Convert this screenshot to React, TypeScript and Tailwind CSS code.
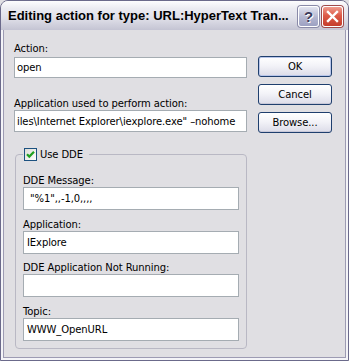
import React from 'react'

const Label = ({ text, className = '' }: { text: string; className?: string }) => (
    <div className={`h-[12px] leading-[12px] whitespace-nowrap ${className}`}>{text}</div>
)

const Field = ({ value, className = '' }: { value: string; className?: string }) => (
    <div className={`flex items-center overflow-hidden whitespace-nowrap bg-white border border-[#a5acb2] ${className}`}>
        {value}
    </div>
)

const XpButton = ({ label, isDefault = false }: { label: string; isDefault?: boolean }) => (
    <div
        className={`h-[21px] w-[74px] flex items-center justify-center rounded-[3px] border border-[#1f3f6e] bg-[linear-gradient(to_bottom,#ffffff,#f3f3f8_45%,#dcdce8)] ${
            isDefault ? 'shadow-[inset_0_0_0_1px_#b9c6ea]' : 'shadow-[inset_0_-1px_0_#c8c8d8]'
        }`}
    >
        {label}
    </div>
)

const App = () => {
    const ddeFields = [
        { label: 'DDE Message:', value: ' "%1",,-1,0,,,,', gap: 'mt-[14px]' },
        { label: 'Application:', value: 'IExplore', gap: 'mt-[9px]' },
        { label: 'DDE Application Not Running:', value: '', gap: 'mt-[8px]' },
        { label: 'Topic:', value: 'WWW_OpenURL', gap: 'mt-[9px]' },
    ]

    return (
        <div className="w-[349px] h-[361px] bg-[#e0dfe3]">
            <div className="flex flex-col h-full rounded-t-[8px] border border-[#6b6a8b] overflow-hidden">
                {/* title bar */}
                <div className="h-[29px] flex items-center pl-[7px] pr-[5px] bg-[linear-gradient(to_bottom,#fdfdfe_0%,#ececf2_25%,#dfdfe8_60%,#c4c4d3_100%)]">
                    <span className="flex-1 pt-[1px] text-[13px] font-bold text-black whitespace-nowrap font-['Liberation_Sans',Arial,sans-serif]">
                        Editing action for type: URL:HyperText Tran...
                    </span>
                    <div className="flex gap-[3px] pt-[1px]">
                        <div className="w-[21px] h-[21px] rounded-[3px] border border-white flex items-center justify-center bg-[linear-gradient(to_bottom,#e2e4f0,#b3b6d0_55%,#9da1c2)] shadow-[0_0_0_1px_#8a8aa8]">
                            <span className="text-[15px] font-bold leading-none text-[#3a3a5c] font-['Liberation_Sans',Arial,sans-serif] [text-shadow:0_0_1px_#fff,1px_1px_0_#fff]">
                                ?
                            </span>
                        </div>
                        <div className="w-[21px] h-[21px] rounded-[3px] border border-white flex items-center justify-center bg-[linear-gradient(to_bottom,#f09c8e,#dc5a48_45%,#c53d2c)] shadow-[0_0_0_1px_#a04a4a]">
                            <svg width="13" height="13" viewBox="0 0 13 13">
                                <path d="M2 2 L11 11 M11 2 L2 11" stroke="#fff" strokeWidth="2.4" strokeLinecap="square" />
                            </svg>
                        </div>
                    </div>
                </div>

                {/* frame */}
                <div className="flex-1 bg-[#f4f4f8] px-[2px] pb-[2px]">
                    <div className="h-full border border-t-0 border-[#9d9bb3] bg-[#e0dfe3] flex pl-[10px] text-[10px] tracking-[-0.1px] text-black font-['DejaVu_Sans',Tahoma,sans-serif]">
                        <div className="w-[233px] flex flex-col pt-[12px]">
                            <div className="h-[13px] leading-[13px]">Action:</div>
                            <Field value="open" className="mt-[2px] h-[21px] pl-[2px]" />
                            <div className="mt-[19px] h-[13px] leading-[13px] whitespace-nowrap">
                                Application used to perform action:
                            </div>
                            <Field
                                value={'iles\\Internet Explorer\\iexplore.exe" \u2013nohome'}
                                className="h-[22px] pl-[2px]"
                            />

                            <fieldset className="mt-[16px] ml-[1px] w-[232px] border border-[#b9b8c4] rounded-[4px] px-[7px] pb-[7px]">
                                <legend className="flex items-center gap-[3px] pl-[1px] pr-[6px]">
                                    <span className="w-[13px] h-[13px] border border-[#1c5180] bg-[linear-gradient(135deg,#dcdcd7,#ffffff)] flex items-center justify-center">
                                        <svg width="11" height="11" viewBox="0 0 11 11">
                                            <path d="M2 5.2 L4.3 7.6 L9 2.8" stroke="#21a121" strokeWidth="2.2" fill="none" />
                                        </svg>
                                    </span>
                                    <span className="leading-[13px]">Use DDE</span>
                                </legend>
                                {ddeFields.map((f, i) => (
                                    <div key={i} className={f.gap}>
                                        <Label text={f.label} />
                                        <Field value={f.value} className="h-[23px] pl-[3px] whitespace-pre" />
                                    </div>
                                ))}
                            </fieldset>
                        </div>

                        <div className="ml-[11px] flex flex-col gap-[7px] pt-[26px]">
                            <XpButton label="OK" isDefault />
                            <XpButton label="Cancel" />
                            <XpButton label="Browse..." />
                        </div>
                    </div>
                </div>
            </div>
        </div>
    )
}

export default App
